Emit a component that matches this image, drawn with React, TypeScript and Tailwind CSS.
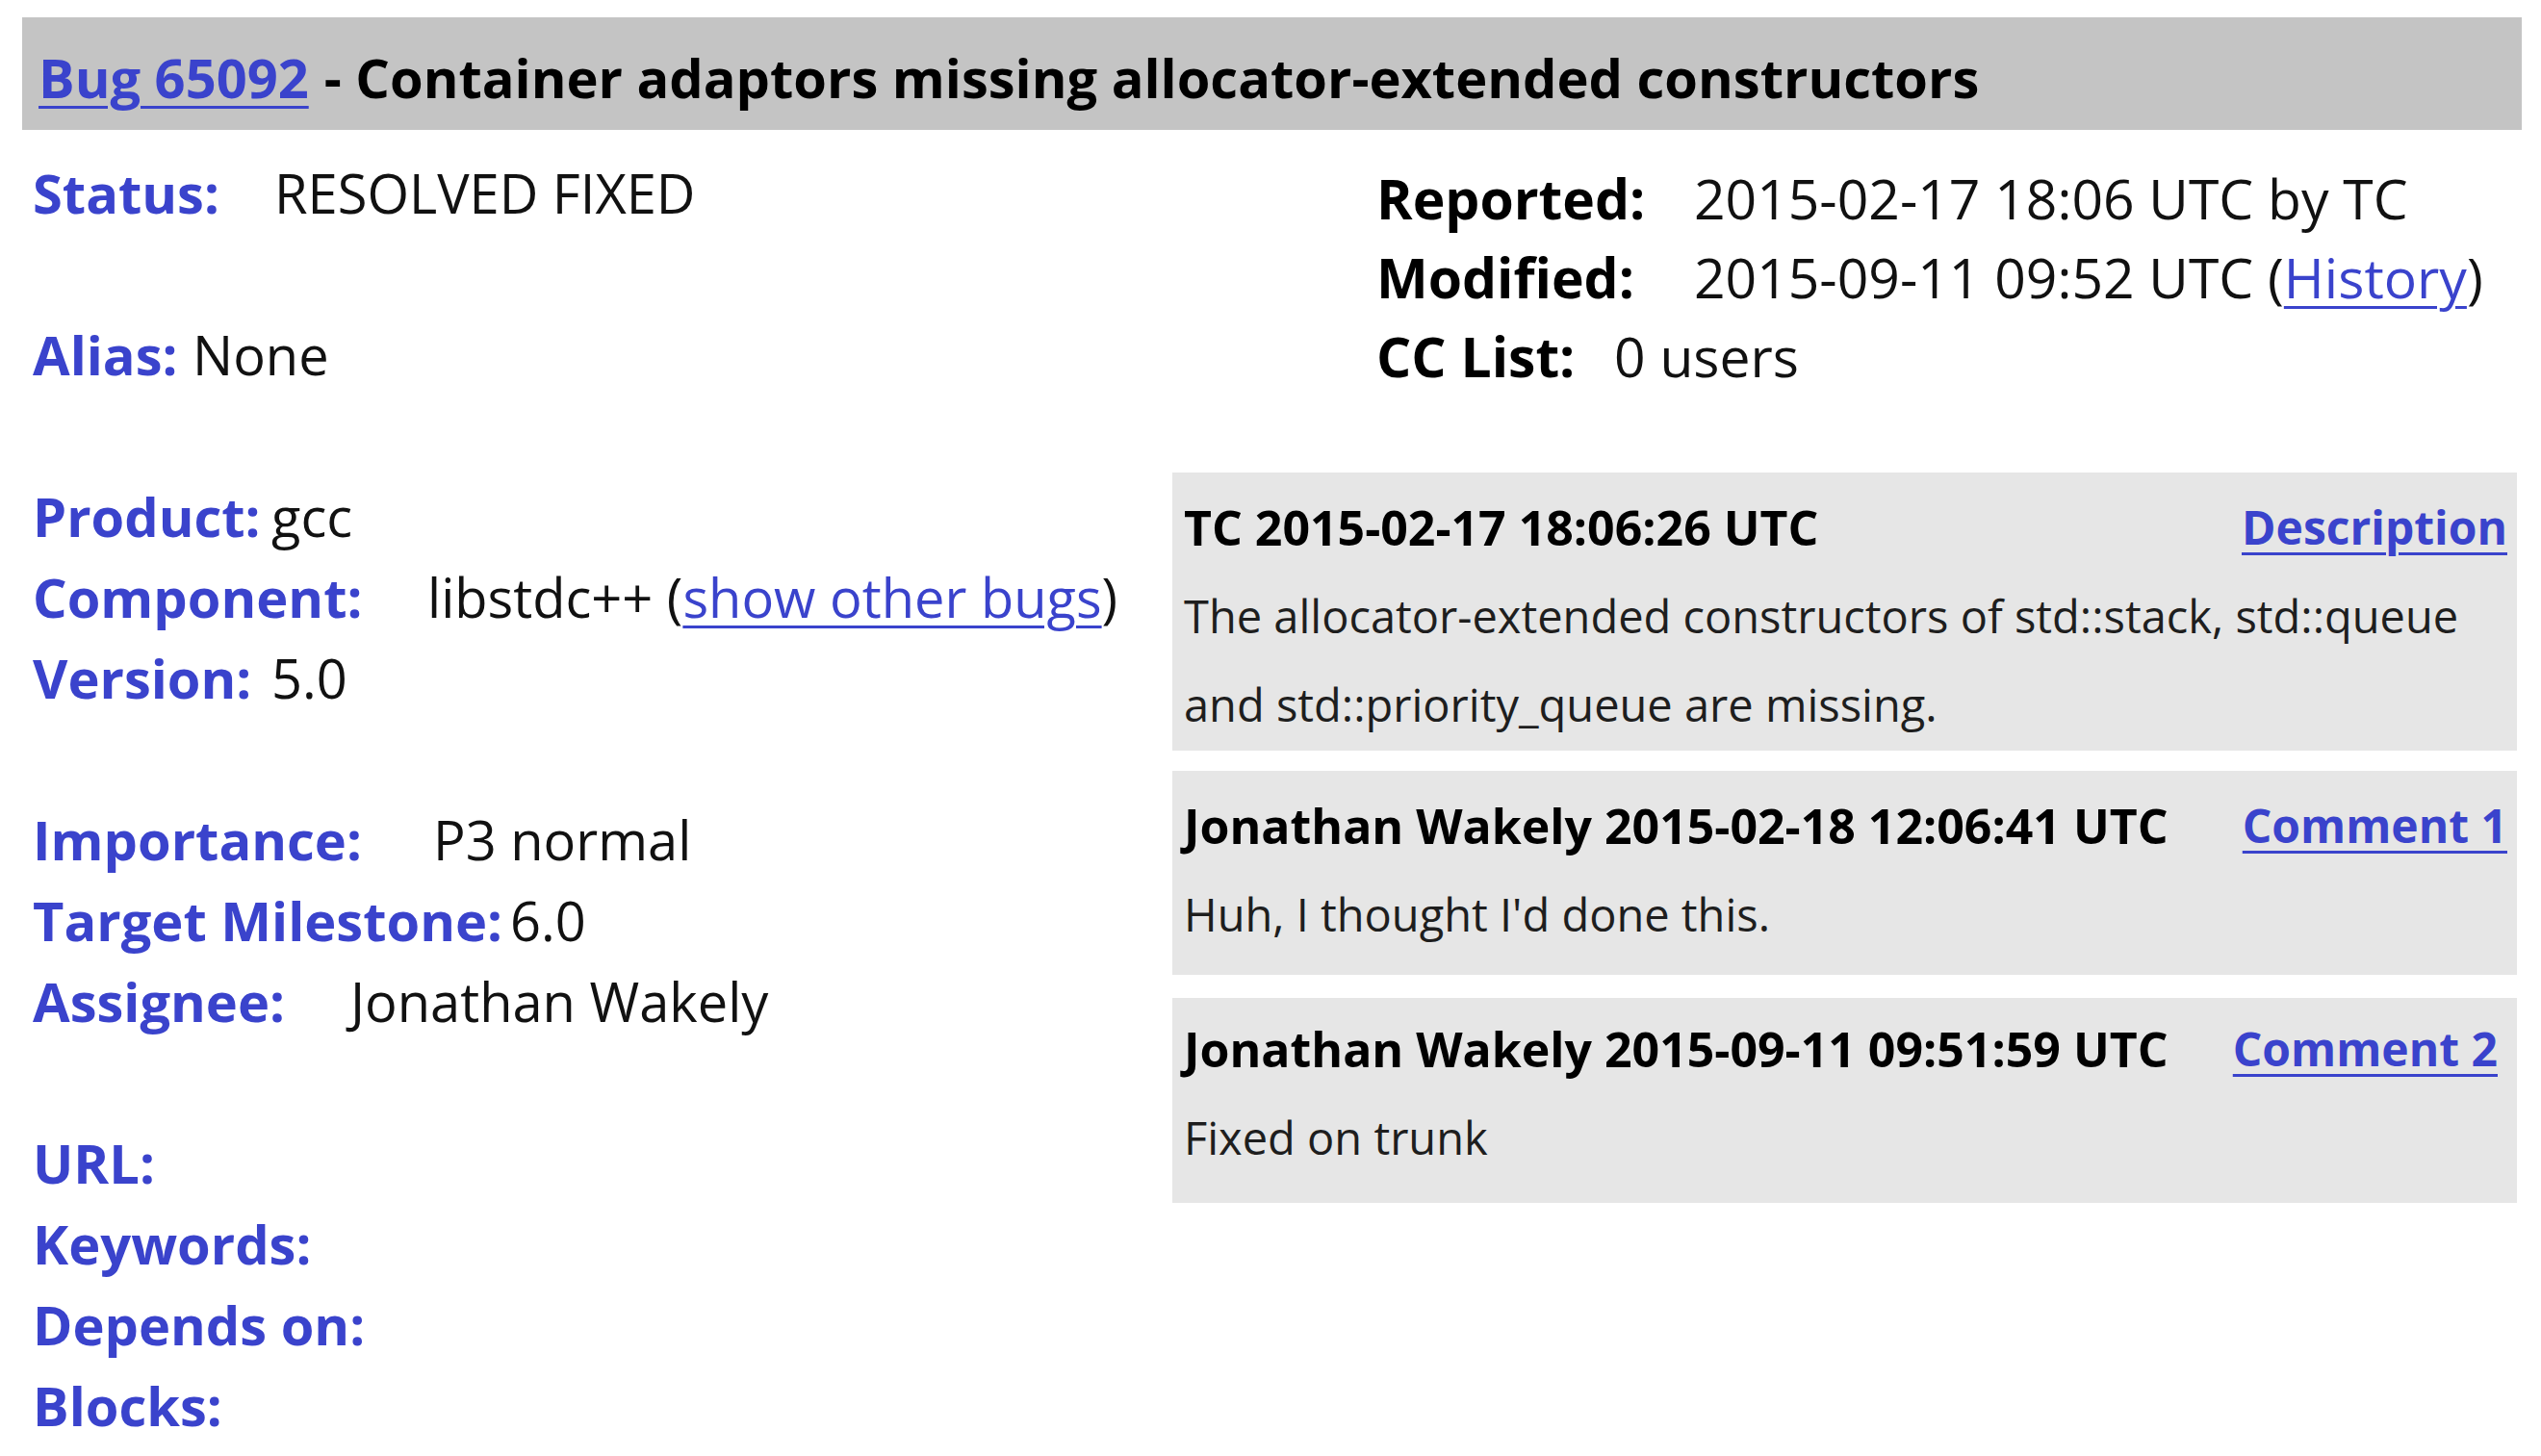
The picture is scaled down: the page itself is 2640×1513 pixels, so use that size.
import * as React from "react";

// Bugzilla-style bug summary, blown up to screenshot scale

interface RowProps {
  label: string;
  labelWidth: string; // e.g. "w-[251px]"
  children?: React.ReactNode;
}

const FieldRow: React.FC<RowProps> = ({ label, labelWidth, children }) => (
  <div className="flex h-[84px] items-center leading-[84px] whitespace-nowrap">
    <span className={`${labelWidth} shrink-0 font-bold text-[#3a43cc]`}>{label}</span>
    {children && <span className="text-[#111]">{children}</span>}
  </div>
);

const Spacer = () => <div className="h-[84px]" />;

interface MetaProps {
  label: string;
  labelWidth: string;
  children: React.ReactNode;
}

const MetaRow: React.FC<MetaProps> = ({ label, labelWidth, children }) => (
  <div className="flex h-[82px] items-center leading-[82px] whitespace-nowrap">
    <span className={`${labelWidth} shrink-0 font-bold text-black`}>{label}</span>
    <span className="text-[#111]">{children}</span>
  </div>
);

interface CommentProps {
  author: string;
  link: string;
  className: string; // height + padding tweaks per box
  children: React.ReactNode;
}

const Comment: React.FC<CommentProps> = ({ author, link, className, children }) => (
  <div className={`w-[1397px] bg-[#e6e6e6] pl-[12px] ${className}`}>
    <div className="flex h-[92px] items-center justify-between gap-[24px] leading-[92px] whitespace-nowrap">
      <span className="text-[50px] font-bold text-black">{author}</span>
      <a href="#" className="text-[48px] font-bold text-[#3a43cc] underline decoration-[3px] underline-offset-[8px]">
        {link}
      </a>
    </div>
    <div className="text-[47px] leading-[92px] whitespace-nowrap text-[#1e1e1e]">{children}</div>
  </div>
);

export default function App() {
  return (
    <div className="min-h-screen w-full bg-white font-['Open_Sans',sans-serif]">
      {/* title bar */}
      <div className="pt-[18px] pl-[23px]">
        <div className="flex h-[117px] w-[2597px] items-center bg-[#c4c4c4] pt-[6px] pl-[17px] text-[56px] font-bold whitespace-nowrap">
          <a href="#" className="text-[#3a43cc] underline decoration-[3px] underline-offset-[8px]">
            Bug 65092
          </a>
          <span className="ml-[16px] text-black">- Container adaptors missing allocator-extended constructors</span>
        </div>
      </div>

      <div className="flex">
        {/* left: bug fields */}
        <div className="w-[1218px] shrink-0 pt-[23px] pl-[34px] text-[56px]">
          <FieldRow label="Status:" labelWidth="w-[251px]">RESOLVED FIXED</FieldRow>
          <Spacer />
          <FieldRow label="Alias:" labelWidth="w-[166px]">None</FieldRow>
          <Spacer />
          <FieldRow label="Product:" labelWidth="w-[248px]">gcc</FieldRow>
          <FieldRow label="Component:" labelWidth="w-[410px]">
            libstdc++ (
            <a href="#" className="text-[#3a43cc] underline decoration-[3px] underline-offset-[8px]">
              show other bugs
            </a>
            )
          </FieldRow>
          <FieldRow label="Version:" labelWidth="w-[248px]">5.0</FieldRow>
          <Spacer />
          <FieldRow label="Importance:" labelWidth="w-[416px]">P3 normal</FieldRow>
          <FieldRow label="Target Milestone:" labelWidth="w-[496px]">6.0</FieldRow>
          <FieldRow label="Assignee:" labelWidth="w-[330px]">Jonathan Wakely</FieldRow>
          <Spacer />
          <FieldRow label="URL:" labelWidth="w-[300px]" />
          <FieldRow label="Keywords:" labelWidth="w-[300px]" />
          <FieldRow label="Depends on:" labelWidth="w-[400px]" />
          <FieldRow label="Blocks:" labelWidth="w-[300px]" />
        </div>

        {/* right: meta + comments */}
        <div className="flex-1">
          <div className="mt-[30px] ml-[212px] text-[57px]">
            <MetaRow label="Reported:" labelWidth="w-[330px]">2015-02-17 18:06 UTC by TC</MetaRow>
            <MetaRow label="Modified:" labelWidth="w-[330px]">
              2015-09-11 09:52 UTC (
              <a href="#" className="text-[#3a43cc] underline decoration-[3px] underline-offset-[8px]">
                History
              </a>
              )
            </MetaRow>
            <MetaRow label="CC List:" labelWidth="w-[247px]">0 users</MetaRow>
          </div>

          <div className="mt-[80px] flex flex-col">
            <Comment author="TC 2015-02-17 18:06:26 UTC" link="Description" className="h-[289px] pt-[11px] pr-[10px]">
              The allocator-extended constructors of std::stack, std::queue
              <br />
              and std::priority_queue are missing.
            </Comment>
            <Comment author="Jonathan Wakely 2015-02-18 12:06:41 UTC" link="Comment 1" className="mt-[21px] h-[212px] pt-[11px] pr-[10px]">
              Huh, I thought I'd done this.
            </Comment>
            <Comment author="Jonathan Wakely 2015-09-11 09:51:59 UTC" link="Comment 2" className="mt-[24px] h-[213px] pt-[7px] pr-[20px]">
              Fixed on trunk
            </Comment>
          </div>
        </div>
      </div>
    </div>
  );
}
